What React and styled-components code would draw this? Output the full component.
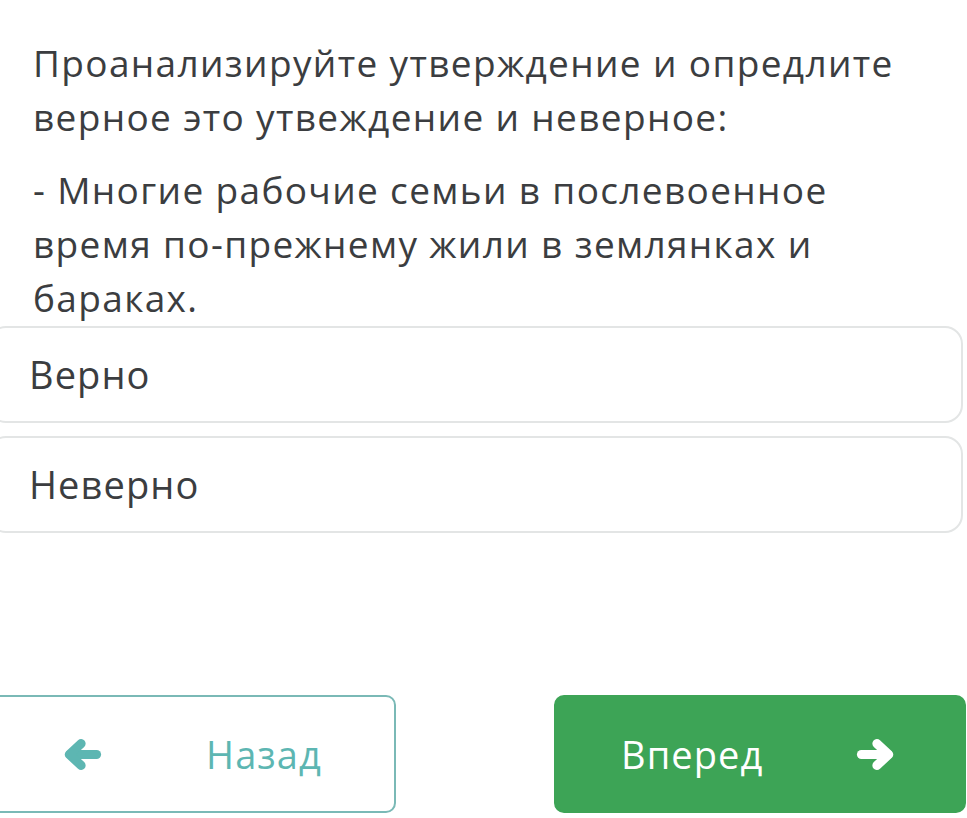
import React, { useState } from "react";
import styled, { createGlobalStyle } from "styled-components";

const GlobalStyle = createGlobalStyle`
  html, body {
    margin: 0;
    padding: 0;
    background: #ffffff;
  }
  body {
    font-family: "Open Sans", "Noto Sans", sans-serif;
    color: #3b3d40;
  }
`;

const Page = styled.div`
  width: 967px;
  height: 818px;
  overflow: hidden;
  display: flex;
  flex-direction: column;
`;

const Question = styled.div`
  padding: 36px 40px 0 33px;
`;

const Paragraph = styled.p`
  margin: 0 0 19px;
  font-size: 37px;
  line-height: 54px;
  letter-spacing: 1.35px;
  color: #3b3d40;
`;

const Options = styled.div`
  margin: -18px 4px 0 -12px;
  display: flex;
  flex-direction: column;
  gap: 13px;
`;

const Option = styled.button`
  height: 97px;
  display: flex;
  align-items: center;
  padding: 0 0 2px 39px;
  background: #ffffff;
  border: 2px solid ${(p) => (p.selected ? "#3da456" : "#e3e5e5")};
  border-radius: 18px;
  font-family: "Open Sans", "Noto Sans", sans-serif;
  font-size: 38px;
  letter-spacing: 1.1px;
  color: #3b3d40;
  text-align: left;
  cursor: pointer;
`;

const Footer = styled.div`
  margin-top: auto;
  margin-bottom: 5px;
  margin-left: -16px;
  display: flex;
  gap: 158px;
`;

const NavButton = styled.button`
  width: 412px;
  height: 118px;
  display: flex;
  align-items: center;
  justify-content: space-between;
  box-sizing: border-box;
  border-radius: 10px;
  font-family: "Open Sans", "Noto Sans", sans-serif;
  font-size: 38px;
  letter-spacing: 1.1px;
  cursor: pointer;
  background: ${(p) => (p.primary ? "#3da456" : "#ffffff")};
  color: ${(p) => (p.primary ? "#ffffff" : "#5db6b2")};
  border: 2px solid ${(p) => (p.primary ? "#3da456" : "#7ab9b6")};
  padding: ${(p) => (p.primary ? "0 68px 0 65px" : "0 72px 0 76px")};
`;

const ArrowIcon = styled.svg`
  width: 40px;
  height: 33px;
  transform: ${(p) => (p.left ? "scaleX(-1)" : "none")};
`;

function Arrow({ left }) {
  return (
    <ArrowIcon left={left ? 1 : 0} viewBox="0 0 44 36" aria-hidden="true">
      <g
        fill="none"
        stroke="currentColor"
        strokeWidth="10"
        strokeLinecap="round"
        strokeLinejoin="round"
      >
        <line x1="6" y1="18" x2="35" y2="18" />
        <polyline points="23,6 36,18 23,30" />
      </g>
    </ArrowIcon>
  );
}

export default function App() {
  const [answer, setAnswer] = useState(null);

  return (
    <Page>
      <GlobalStyle />
      <Question>
        <Paragraph>
          Проанализируйте утверждение и опредлите верное это утвеждение и
          неверное:
        </Paragraph>
        <Paragraph>
          - Многие рабочие семьи в послевоенное время по-прежнему жили в
          землянках и бараках.
        </Paragraph>
      </Question>
      <Options>
        {["Верно", "Неверно"].map((label) => (
          <Option
            key={label}
            selected={answer === label}
            onClick={() => setAnswer(label)}
          >
            {label}
          </Option>
        ))}
      </Options>
      <Footer>
        <NavButton>
          <Arrow left />
          <span>Назад</span>
        </NavButton>
        <NavButton primary>
          <span>Вперед</span>
          <Arrow />
        </NavButton>
      </Footer>
    </Page>
  );
}
